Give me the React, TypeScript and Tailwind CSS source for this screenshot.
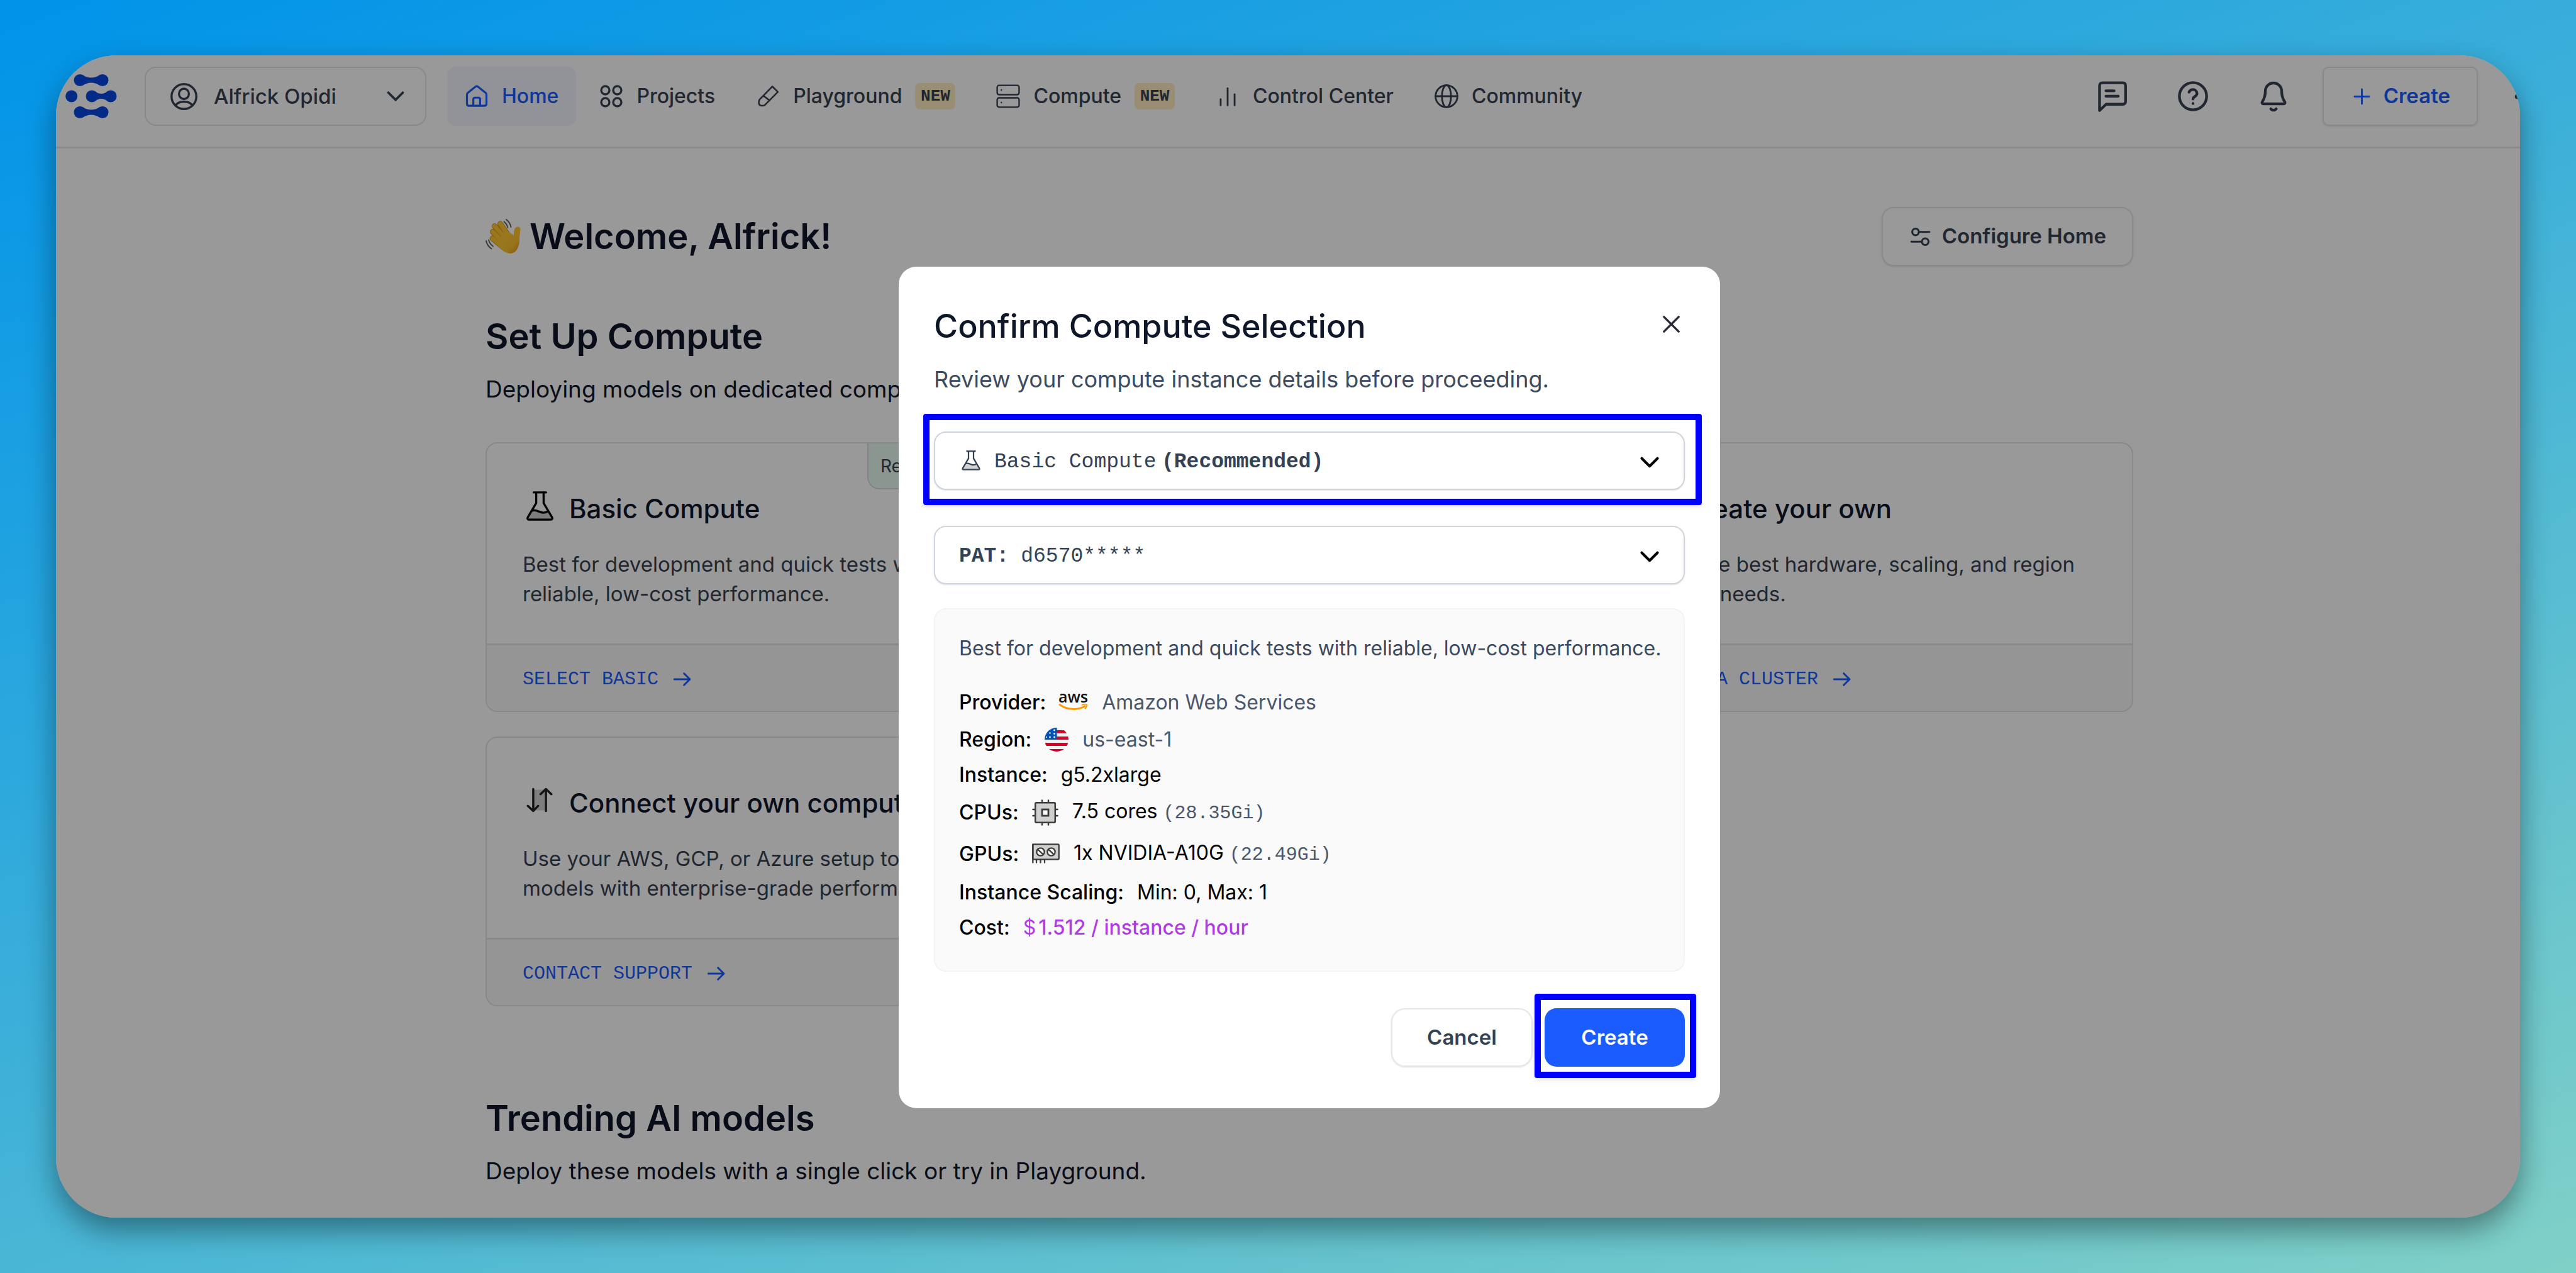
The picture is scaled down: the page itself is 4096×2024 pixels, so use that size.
import type { ReactNode } from "react";

const nameStack = "font-['Inter',sans-serif]";
const monoStack = "font-['Liberation_Mono',monospace]";

type IconProps = { className?: string };

function Stroke({
  className = "",
  width = 1.6,
  children,
}: IconProps & { width?: number; children: ReactNode }) {
  return (
    <svg
      viewBox="0 0 24 24"
      fill="none"
      stroke="currentColor"
      strokeWidth={width}
      strokeLinecap="round"
      strokeLinejoin="round"
      aria-hidden="true"
      className={`shrink-0 ${className}`}
    >
      {children}
    </svg>
  );
}

const Dumbbell = ({ x, y, w }: { x: number; y: number; w: number }) => (
  <g>
    <circle cx={x + 10} cy={y + 9.5} r="9.5" />
    <circle cx={x + w - 10} cy={y + 9.5} r="9.5" />
    <path
      d={`M${x + 14} ${y + 1} Q${x + w / 2} ${y + 10} ${x + w - 14} ${y + 1} V${y + 18} Q${x + w / 2} ${y + 9} ${x + 14} ${y + 18} Z`}
    />
  </g>
);

const Logo = () => (
  <svg viewBox="0 0 83 70" className="h-[70px] w-[83px] shrink-0 text-[#0546e2]" fill="currentColor" role="img" aria-label="Clarifai">
    <Dumbbell x={13} y={0} w={56} />
    <circle cx="9.7" cy="35" r="9.5" />
    <Dumbbell x={32} y={25.5} w={50} />
    <Dumbbell x={13} y={51} w={56} />
  </svg>
);

const UserIcon = ({ className }: IconProps) => (
  <Stroke className={className} width={1.9}>
    <circle cx="12" cy="12" r="11" />
    <ellipse cx="12" cy="9.6" rx="4.4" ry="4.6" />
    <path d="M4.6 20c1.2-2.4 3.8-3.4 7.4-3.4s6.200 1 7.400 3.400" />
  </Stroke>
);

const HomeIcon = ({ className }: IconProps) => (
  <Stroke className={className} width={2}>
    <path d="M2.200 10.400c0-.8.3-1.400.9-1.900L10.800 2.400a1.900 1.900 0 0 1 2.400 0l7.700 6.100c.6.500.9 1.100.9 1.900v9.100c0 1.200-.8 2-2 2H4.200c-1.200 0-2-.8-2-2z" />
    <path d="M8.600 21.300v-6.100c0-1.100.7-1.800 1.800-1.800h3.200c1.100 0 1.800.7 1.800 1.800v6.100" />
  </Stroke>
);

const ProjectsIcon = ({ className }: IconProps) => (
  <Stroke className={className} width={2.1}>
    <circle cx="6" cy="6" r="4.100" />
    <circle cx="18" cy="6" r="4.100" />
    <circle cx="6" cy="18" r="4.100" />
    <circle cx="18" cy="18" r="4.100" />
  </Stroke>
);

const PlaygroundIcon = ({ className }: IconProps) => (
  <Stroke className={className} width={1.6}>
    <path d="M16.500 2.200 22 7.700 9.200 20.600a3 3 0 0 1-2.100.9H5.500a3 3 0 0 1-2.600-2.700v-1.500a3 3 0 0 1 .8-2.100z" />
    <path d="M7.300 12c2 .2 4 2.900 6.200 4" />
  </Stroke>
);

const ComputeIcon = ({ className }: IconProps) => (
  <Stroke className={className} width={1.5}>
    <rect x="1" y="1" width="22" height="9.400" rx="2" />
    <rect x="1" y="13.600" width="22" height="9.400" rx="2" />
    <path d="M5.200 5.700v.1M5.200 18.300v.1" />
  </Stroke>
);

const ControlIcon = ({ className }: IconProps) => (
  <Stroke className={className} width={1.8}>
    <path d="M5 15v6M12 4v17M19 10v11" />
  </Stroke>
);

const GlobeIcon = ({ className }: IconProps) => (
  <Stroke className={className} width={1.800}>
    <circle cx="12" cy="12" r="11" />
    <ellipse cx="12" cy="12" rx="4.600" ry="11" />
    <path d="M1 12h22" />
  </Stroke>
);

const MessageIcon = ({ className }: IconProps) => (
  <Stroke className={className} width={2}>
    <path d="M2.500 22.500V4.200c0-1.300.8-2.100 2.100-2.100h14.900c1.300 0 2.100.8 2.100 2.100v11.600c0 1.300-.8 2.100-2.100 2.100H7.300z" />
    <path d="M7.200 8h6M7.200 12h9" />
  </Stroke>
);

const HelpIcon = ({ className }: IconProps) => (
  <Stroke className={className} width={2}>
    <circle cx="12" cy="12" r="10" />
    <path d="M9.100 9a3 3 0 0 1 5.800 1c0 2-2.900 2.400-2.900 4M12 17.300v.1" />
  </Stroke>
);

const BellIcon = ({ className }: IconProps) => (
  <Stroke className={className} width={2}>
    <path d="M12 2.300a6 6 0 0 0-6 6c0 4.600-1.400 6.400-2.300 7.900-.4.700 0 1.400.8 1.400h15c.8 0 1.200-.7.8-1.400-.9-1.500-2.300-3.300-2.300-7.900a6 6 0 0 0-6-6z" />
    <path d="M10 21.200c.5.700 1.200 1 2 1s1.500-.3 2-1" />
  </Stroke>
);

const PlusIcon = ({ className }: IconProps) => (
  <Stroke className={className} width={1.800}>
    <path d="M12 4.500v15M4.500 12h15" />
  </Stroke>
);

const DotsIcon = ({ className }: IconProps) => (
  <svg viewBox="0 0 24 24" fill="currentColor" aria-hidden="true" className={`shrink-0 ${className}`}>
    <circle cx="3" cy="12" r="2.500" />
    <circle cx="12" cy="12" r="2.500" />
    <circle cx="21" cy="12" r="2.500" />
  </svg>
);

const SlidersIcon = ({ className }: IconProps) => (
  <Stroke className={className} width={2}>
    <circle cx="7" cy="7" r="3.400" />
    <path d="M11 7h10.300M2.700 17H13" />
    <circle cx="17" cy="17" r="3.400" />
  </Stroke>
);

const ChevronIcon = ({ className, width = 2 }: IconProps & { width?: number }) => (
  <Stroke className={className} width={width}>
    <path d="m6 9 6 6 6-6" />
  </Stroke>
);

const ArrowIcon = ({ className }: IconProps) => (
  <Stroke className={className} width={2.200}>
    <path d="M2.500 12h18.500M14 5l7 7-7 7" />
  </Stroke>
);

const CloseIcon = ({ className }: IconProps) => (
  <Stroke className={className} width={1.900}>
    <path d="M5.500 5.500l13 13M18.500 5.500l-13 13" />
  </Stroke>
);

const FlaskIcon = ({ className }: IconProps) => (
  <Stroke className={className} width={1.700}>
    <path d="M5.800 16.300c2-.9 4.200.2 6.200 1 2 .8 4.200.7 6.300-.6l3.200 4.800c.5.800.1 1.500-.8 1.500H3.300c-.9 0-1.300-.7-.8-1.500z" fill="#808080" fillOpacity=".35" stroke="none" />
    <path d="M9 1v8.600l-6.900 11.700c-.5.900-.1 1.700.9 1.700h18c1 0 1.400-.8.900-1.700L15 9.600V1M7 1h10" />
    <path d="M5.800 15.800c2-.9 4.200.2 6.200 1 2 .8 4.200.9 6.300-.4" />
  </Stroke>
);

const SwapIcon = ({ className }: IconProps) => (
  <Stroke className={className} width={1.900}>
    <path d="M6.500 3h11v18h-11z" fill="#808080" fillOpacity=".35" stroke="none" />
    <path d="M6.500 2.500v19M1.800 17.100 6.500 21.500l4.200-4.400M17.500 21.500v-19M12.800 6.900 17.500 2.500l4.700 4.400" />
  </Stroke>
);

const CpuIcon = () => (
  <svg viewBox="0 0 42 42" fill="none" stroke="#3c3b38" strokeWidth="2.500" strokeLinecap="round" aria-hidden="true" className="size-[42px] shrink-0">
    <path d="M16 1.500V5M26 1.500V5M16 37v3.500M26 37v3.500M1.500 16H5M1.500 26H5M37 16h3.500M37 26h3.500" />
    <rect x="5.200" y="5.200" width="31.600" height="31.600" rx="2" fill="#d0d0d0" />
    <rect x="16" y="16" width="10" height="10" fill="#fafafa" strokeWidth="2.800" />
  </svg>
);

const GpuIcon = () => (
  <svg viewBox="0 0 44 32" fill="none" stroke="#3c3b38" strokeWidth="2.300" strokeLinecap="round" aria-hidden="true" className="h-8 w-11 shrink-0">
    <rect x="1.300" y="1.300" width="41.400" height="24" rx="1.500" fill="#d0d0d0" />
    <path d="M1.300 1.300v29.200M7 26v4.500M13.500 26v4.500M20 26v4.500" />
    <circle cx="13.500" cy="13.500" r="6.200" fill="#fafafa" />
    <circle cx="30.500" cy="13.500" r="6.200" fill="#fafafa" />
    <path d="M9.500 9.800l8 7.600M26.500 9.800l8 7.600" />
  </svg>
);

const FlagIcon = () => (
  <svg viewBox="0 0 38 38" aria-hidden="true" className="size-[38px] shrink-0">
    <clipPath id="flag-round">
      <circle cx="19" cy="19" r="19" />
    </clipPath>
    <g clipPath="url(#flag-round)">
      <path fill="#f0f0f0" d="M0 0h38v38H0z" />
      <path fill="#d80027" d="M19 4h19v5H19zM19 14h19v5H19zM0 24h38v5H0zM0 34h38v4H0z" />
      <path fill="#0052b4" d="M0 0h19.500v19H0z" />
      <g fill="#f0f0f0">
        <circle cx="15.500" cy="4" r="1.400" />
        <circle cx="8.500" cy="8.500" r="1.300" />
        <circle cx="15.500" cy="9.500" r="1.400" />
        <circle cx="8.500" cy="15" r="1.400" />
        <circle cx="15.500" cy="15" r="1.400" />
        <circle cx="3" cy="15" r="1.100" />
      </g>
    </g>
  </svg>
);

const AwsIcon = () => (
  <svg viewBox="0 0 46 30" role="img" aria-label="AWS" className="h-[30px] w-[46px] shrink-0 overflow-visible">
    <text x="22.500" y="16" textAnchor="middle" fontFamily="Open Sans, sans-serif" fontWeight="600" fontSize="25" fill="#111">
      aws
    </text>
    <path d="M1 19.500c12 8.500 29 9 40 2.200" fill="none" stroke="#ff9900" strokeWidth="3" strokeLinecap="round" />
    <path d="M36.500 19.800c3-1.200 6.500-1.300 7.500-.6.700 1-.5 4.500-2.600 6.600" fill="none" stroke="#ff9900" strokeWidth="1.800" strokeLinecap="round" strokeLinejoin="round" />
  </svg>
);

const WaveIcon = () => (
  <svg viewBox="0 0 56 56" role="img" aria-label="Waving hand" className="size-14 shrink-0">
    <defs>
      <linearGradient id="skin" x1="0" y1="0" x2="1" y2="1">
        <stop offset="0" stopColor="#ffcf3f" />
        <stop offset=".7" stopColor="#fdc02f" />
        <stop offset="1" stopColor="#e58a12" />
      </linearGradient>
    </defs>
    <g stroke="#dc9518" strokeWidth="9" strokeLinecap="round" fill="none">
      <path d="M11 31l17 14M11.500 20.500l18 18M14.500 11.500l19 21M23.500 8l14 20" />
    </g>
    <path d="M16 37 36 20l9 6c0-6 .5-11 4-13 3-1.500 6.500 0 6.500 3.500-.5 4-1.500 10-1.500 17 0 12-6 20.500-13 21.500-8 1-19-7-25-18z" fill="url(#skin)" />
    <g stroke="#fdc733" strokeWidth="7" strokeLinecap="round" fill="none">
      <path d="M11 31l17 14M11.500 20.500l18 18M14.500 11.500l19 21M23.500 8l14 20" />
    </g>
    <g stroke="#5a5a5a" strokeWidth="1.800" strokeLinecap="round" fill="none">
      <path d="M33 1c4 3 6.500 7 7.500 12M29.500 4.500c3 2.500 5 5.500 6 9.500M1 35c1 5 4 9.500 8.500 12.500M5 33.500c1 4 3.500 7.500 7 10" />
    </g>
  </svg>
);

const navItems = [
  { label: "Home", Icon: HomeIcon, active: true, isNew: false },
  { label: "Projects", Icon: ProjectsIcon, active: false, isNew: false },
  { label: "Playground", Icon: PlaygroundIcon, active: false, isNew: true },
  { label: "Compute", Icon: ComputeIcon, active: false, isNew: true },
  { label: "Control Center", Icon: ControlIcon, active: false, isNew: false },
  { label: "Community", Icon: GlobeIcon, active: false, isNew: false },
];

function Header() {
  return (
    <header className="flex h-[148px] items-start border-b-3 border-[#e6e6ee] pt-[18px] pr-10 pl-[15px] text-[#374151]">
      <div className="flex h-[94px] items-center">
        <Logo />
        <label className="ml-[43px] flex h-[94px] w-[448px] items-center rounded-[18px] border-2 border-[#e3e3ec] pr-6 pl-[39px]">
          <UserIcon className="size-[43px]" />
          <select aria-label="Account" className="ml-[26px] flex-1 appearance-none bg-transparent text-[33px] leading-[47px] font-medium outline-none">
            <option>Alfrick Opidi</option>
          </select>
          <ChevronIcon className="size-[46px]" width={2} />
        </label>
      </div>
      <nav className="ml-[33px] flex items-center gap-[9px]">
        {navItems.map(({ label, Icon, active, isNew }) => (
          <a
            key={label}
            href="#"
            className={`flex h-[94px] items-center gap-[21px] rounded-[14px] px-7 text-[32px] font-medium whitespace-nowrap ${
              active ? "bg-[#f3f5fd] text-[#1a5cff]" : ""
            }`}
          >
            <Icon className="size-[38px]" />
            {label}
            {isNew && (
              <span className={`${monoStack} flex h-[42px] w-16 items-center justify-center rounded-lg bg-[#ffebc0] text-[26px] font-bold`}>
                NEW
              </span>
            )}
          </a>
        ))}
      </nav>
      <div className="ml-auto flex h-[94px] items-center">
        <div className="flex gap-[76px]">
          <button type="button" aria-label="Messages">
            <MessageIcon className="size-[52px]" />
          </button>
          <button type="button" aria-label="Help">
            <HelpIcon className="size-[52px]" />
          </button>
          <button type="button" aria-label="Notifications">
            <BellIcon className="size-[52px]" />
          </button>
        </div>
        <button
          type="button"
          className="ml-[52px] flex h-[94px] items-center gap-4 rounded-[10px] border-2 border-[#e3e3ec] px-[42px] text-[33px] font-semibold text-[#1a5cff] shadow-sm"
        >
          <PlusIcon className="size-[37px]" />
          Create
        </button>
        <button type="button" aria-label="More" className="ml-[58px]">
          <DotsIcon className="size-[37px]" />
        </button>
      </div>
    </header>
  );
}

function Card({
  icon,
  title,
  lines,
  action,
  badge,
  className = "",
}: {
  icon: ReactNode;
  title: string;
  lines: [string, string];
  action: string;
  badge?: string;
  className?: string;
}) {
  return (
    <article className={`relative flex flex-col overflow-hidden rounded-[19px] border-2 border-[#e3e3ea] ${className}`}>
      {badge && (
        <span className="absolute top-0 right-0 flex h-[73px] w-[239px] items-center rounded-bl-[19px] border-b-2 border-l-2 border-[#d8dde2] bg-[#e9fbf1] pl-[19px] text-[28px] text-[#374151]">
          {badge}
        </span>
      )}
      <div className="px-[57px] pt-[75px] pb-[55px]">
        <h3 className="flex h-14 items-center gap-5 text-[42px] font-medium whitespace-nowrap text-[#0f172a]">
          <span className="mb-2 flex w-[54px] justify-center">{icon}</span>
          {title}
        </h3>
        <p className="mt-[38px] text-[33px] leading-[47px] whitespace-nowrap text-[#374151]">
          {lines[0]}
          <br />
          {lines[1]}
        </p>
      </div>
      <div className="flex h-[107px] items-center border-t-3 border-[#e6e6ec] bg-[#f9f9f9] px-[57px] pt-1">
        <a href="#" className={`${monoStack} flex items-center gap-[22px] text-[30px] leading-[42px] text-[#1a5cff]`}>
          {action}
          <ArrowIcon className="size-8" />
        </a>
      </div>
    </article>
  );
}

function Page() {
  return (
    <div className="w-[calc(100%+68px)]">
      <Header />
      <main className="mx-auto w-full max-w-[2620px] text-[#0f172a]">
        <div className="flex items-center justify-between pt-[93px]">
          <h1 className="flex items-center gap-3.5 text-[56px] leading-[64px] font-semibold">
            <WaveIcon />
            Welcome, Alfrick!
          </h1>
          <button
            type="button"
            className="flex h-[94px] items-center gap-4 rounded-[19px] border-2 border-[#e3e3ec] px-[41px] text-[33px] font-semibold text-[#374151] shadow-sm"
          >
            <SlidersIcon className="size-[37px]" />
            Configure Home
          </button>
        </div>

        <section>
          <h2 className="mt-20 text-[56px] leading-[64px] font-semibold">Set Up Compute</h2>
          <p className="mt-[26px] text-[37px] leading-[52px]">Deploying models on dedicated compute.</p>
          <div className="mt-[58px] grid grid-cols-3 gap-x-[38px] gap-y-[39px]">
            <Card
              icon={<FlaskIcon className="size-[47px] text-black" />}
              title="Basic Compute"
              lines={["Best for development and quick tests with", "reliable, low-cost performance."]}
              action="SELECT BASIC"
              badge="Recommended"
            />
            <Card
              className="col-start-3"
              icon={<PlusIcon className="size-[47px] text-black" />}
              title="Create your own"
              lines={["Using the best hardware, scaling, and region", "for your needs."]}
              action="CREATE A CLUSTER"
            />
            <Card
              icon={<SwapIcon className="size-11 text-[#222]" />}
              title="Connect your own compute"
              lines={["Use your AWS, GCP, or Azure setup to run", "models with enterprise-grade performance."]}
              action="CONTACT SUPPORT"
            />
          </div>
        </section>

        <section>
          <h2 className="mt-[146px] text-[56px] leading-[64px] font-semibold">Trending AI models</h2>
          <p className="mt-[26px] text-[37px] leading-[52px]">Deploy these models with a single click or try in Playground.</p>
        </section>
      </main>
    </div>
  );
}

function Row({ label, height = "h-[47px]", children }: { label: string; height?: string; children: ReactNode }) {
  return (
    <div className={`flex items-center gap-[21px] ${height}`}>
      <dt className="font-medium">{label}</dt>
      <dd className="flex items-center gap-[22px]">{children}</dd>
    </div>
  );
}

function Dialog() {
  return (
    <div role="dialog" aria-modal="true" aria-labelledby="dialog-title" className="w-full max-w-[1306px] self-start rounded-[28px] bg-white px-14 pt-[63px] pb-[66px]">
      <div className="flex items-start justify-between">
        <h2 id="dialog-title" className="text-[52px] leading-[64px] font-medium text-[#0f172a]">
          Confirm Compute Selection
        </h2>
        <button type="button" aria-label="Close" className="flex h-14 items-center text-[#2a2a37]">
          <CloseIcon className="size-[43px]" />
        </button>
      </div>
      <p className="mt-[26px] text-[36px] leading-[52px] text-[#3b4a60]">Review your compute instance details before proceeding.</p>

      <div className="relative mt-[57px]">
        <label className={`${monoStack} flex h-[93px] items-center rounded-[19px] border-2 border-[#cfd5df] px-[38px] pt-1 text-[33px] leading-[47px] text-[#344256] shadow-sm`}>
          <span className="flex w-[37px] justify-center pb-1.5">
            <FlaskIcon className="size-8" />
          </span>
          <select aria-label="Compute type" className="ml-[19px] appearance-none bg-transparent outline-none">
            <option>Basic Compute</option>
          </select>
          <strong className="ml-2 font-bold">(Recommended)</strong>
          <ChevronIcon className="-mr-[9px] ml-auto size-[50px] text-black" />
        </label>
        <div className="pointer-events-none absolute -top-7 -right-[27px] -bottom-6 -left-[17px] rounded border-10 border-[#0000ff] shadow-md" />
      </div>

      <label className={`${monoStack} mt-[57px] flex h-[93px] items-center rounded-[19px] border-2 border-[#cfd5df] px-[38px] pt-1 text-[33px] leading-[47px] text-[#344256] shadow-sm`}>
        <strong className="font-bold">PAT:</strong>
        <select aria-label="Personal access token" className="ml-[19px] appearance-none bg-transparent outline-none">
          <option>d6570*****</option>
        </select>
        <ChevronIcon className="-mr-[9px] ml-auto size-[50px] text-black" />
      </label>

      <div className="mt-[38px] rounded-[19px] border-2 border-[#f1f3f8] bg-[#fafafa] px-[38px] pt-[38px] pb-[45px] text-[32px] leading-[47px] text-black">
        <p className="whitespace-nowrap text-[#3b4a60]">
          Best for development and quick tests with reliable, low-cost performance.
        </p>
        <dl className="mt-[35px] flex flex-col gap-[9px]">
          <Row label="Provider:" height="h-[54px]">
            <AwsIcon />
            <span className="text-[#4a566b]">Amazon Web Services</span>
          </Row>
          <Row label="Region:">
            <FlagIcon />
            <span className="text-[#4a566b]">us-east-1</span>
          </Row>
          <Row label="Instance:">g5.2xlarge</Row>
          <Row label="CPUs:" height="h-[55px]">
            <CpuIcon />
            <span>
              7.5 cores <span className={`${monoStack} text-[30px] text-[#4a566b]`}>(28.35Gi)</span>
            </span>
          </Row>
          <Row label="GPUs:" height="h-[58px]">
            <GpuIcon />
            <span>
              1x NVIDIA-A10G <span className={`${monoStack} text-[30px] text-[#4a566b]`}>(22.49Gi)</span>
            </span>
          </Row>
          <Row label="Instance Scaling:">Min: 0, Max: 1</Row>
          <Row label="Cost:">
            <span className="flex gap-1 text-[#b03be6]">
              <span>$</span>
              <span className="font-medium">1.512 / instance / hour</span>
            </span>
          </Row>
        </dl>
      </div>

      <div className="mt-[58px] flex justify-end gap-[19px]">
        <button type="button" className="h-[93px] w-[225px] rounded-[22px] border-2 border-[#e5e5ec] text-[33px] font-semibold text-[#344256] shadow-sm">
          Cancel
        </button>
        <div className="relative">
          <button type="button" className="h-[93px] w-[223px] rounded-[19px] bg-[#1a5cff] text-[33px] font-semibold text-white">
            Create
          </button>
          <div className="pointer-events-none absolute -top-[23px] -right-[18px] -bottom-[18px] -left-4 rounded border-10 border-[#0000ff] shadow-md" />
        </div>
      </div>
    </div>
  );
}

export default function App() {
  return (
    <div className={`${nameStack} flex h-screen bg-[linear-gradient(160deg,#0093e9_0%,#80d0c7_100%)] px-[89px] py-[88px]`}>
      <div className="relative min-w-0 flex-1 overflow-hidden rounded-[96px] bg-white shadow-[0_20px_46px_rgba(0,0,0,0.4)]">
        <Page />
        <div className="absolute inset-y-0 left-0 flex w-[calc(100%+68px)] justify-center bg-black/40 pt-[336px]">
          <Dialog />
        </div>
      </div>
    </div>
  );
}
